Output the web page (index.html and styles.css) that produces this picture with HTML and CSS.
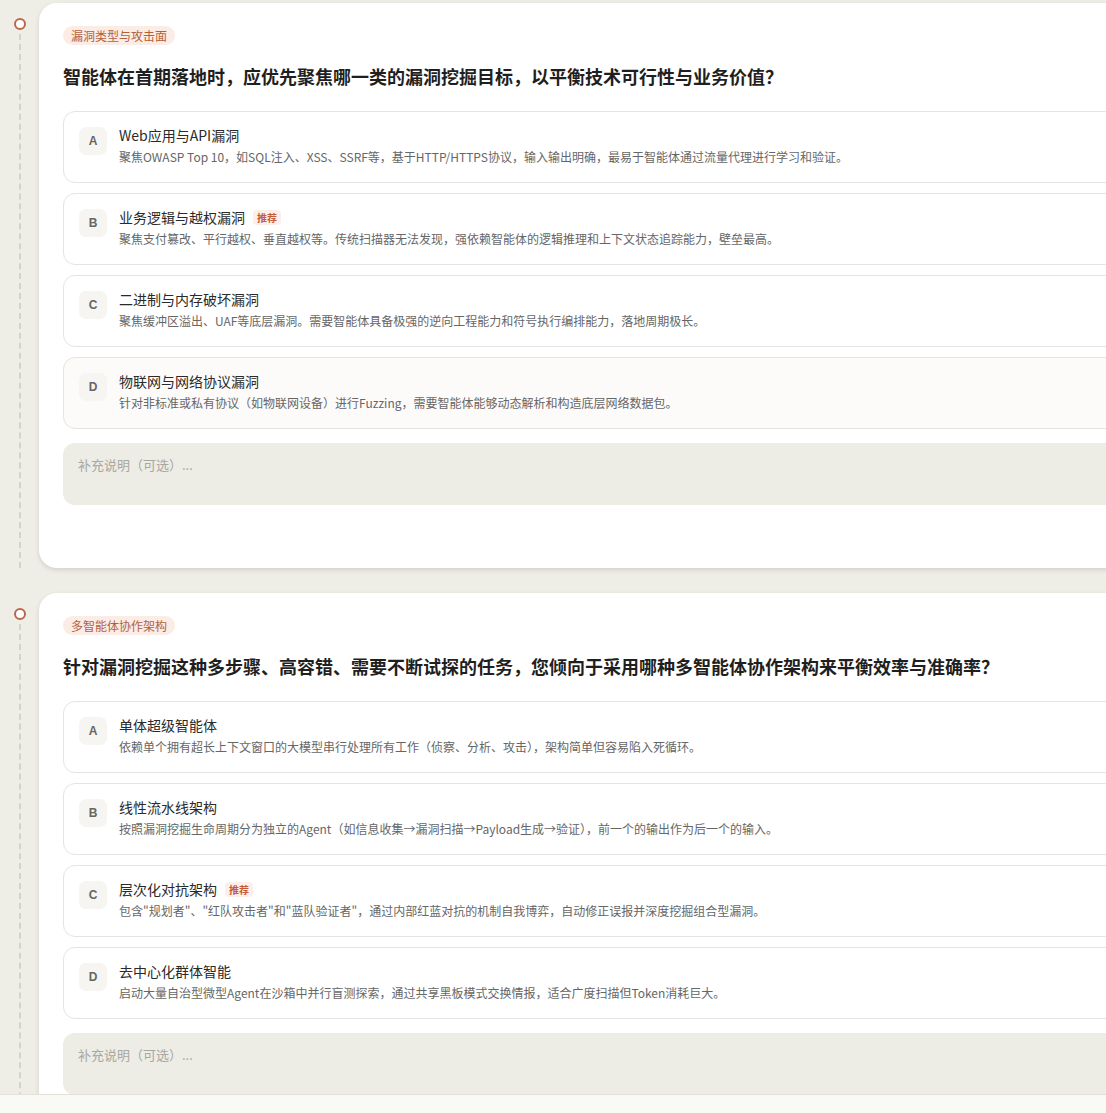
FILE: index.html
```html
<!DOCTYPE html>
<html lang="zh-CN">
<head>
  <meta charset="UTF-8">
  <meta name="viewport" content="width=device-width, initial-scale=1.0">
  <title>需求澄清</title>
  <link rel="stylesheet" href="styles.css">
</head>
<body>
  <div class="flow">

    <section class="step">
      <div class="rail">
        <span class="dot"></span>
        <span class="line"></span>
      </div>
      <div class="card">
        <span class="tag">漏洞类型与攻击面</span>
        <h2 class="question">智能体在首期落地时，应优先聚焦哪一类的漏洞挖掘目标，以平衡技术可行性与业务价值？</h2>
        <div class="options">
          <div class="option">
            <span class="letter">A</span>
            <div class="body">
              <div class="title">Web应用与API漏洞</div>
              <div class="desc">聚焦OWASP Top 10，如SQL注入、XSS、SSRF等，基于HTTP/HTTPS协议，输入输出明确，最易于智能体通过流量代理进行学习和验证。</div>
            </div>
          </div>
          <div class="option">
            <span class="letter">B</span>
            <div class="body">
              <div class="title">业务逻辑与越权漏洞 <span class="pick">推荐</span></div>
              <div class="desc">聚焦支付篡改、平行越权、垂直越权等。传统扫描器无法发现，强依赖智能体的逻辑推理和上下文状态追踪能力，壁垒最高。</div>
            </div>
          </div>
          <div class="option">
            <span class="letter">C</span>
            <div class="body">
              <div class="title">二进制与内存破坏漏洞</div>
              <div class="desc">聚焦缓冲区溢出、UAF等底层漏洞。需要智能体具备极强的逆向工程能力和符号执行编排能力，落地周期极长。</div>
            </div>
          </div>
          <div class="option hover">
            <span class="letter">D</span>
            <div class="body">
              <div class="title">物联网与网络协议漏洞</div>
              <div class="desc">针对非标准或私有协议（如物联网设备）进行Fuzzing，需要智能体能够动态解析和构造底层网络数据包。</div>
            </div>
          </div>
        </div>
        <textarea class="note" placeholder="补充说明（可选）..."></textarea>
      </div>
    </section>

    <section class="step">
      <div class="rail">
        <span class="dot"></span>
        <span class="line"></span>
      </div>
      <div class="card">
        <span class="tag">多智能体协作架构</span>
        <h2 class="question">针对漏洞挖掘这种多步骤、高容错、需要不断试探的任务，您倾向于采用哪种多智能体协作架构来平衡效率与准确率？</h2>
        <div class="options">
          <div class="option">
            <span class="letter">A</span>
            <div class="body">
              <div class="title">单体超级智能体</div>
              <div class="desc">依赖单个拥有超长上下文窗口的大模型串行处理所有工作（侦察、分析、攻击），架构简单但容易陷入死循环。</div>
            </div>
          </div>
          <div class="option">
            <span class="letter">B</span>
            <div class="body">
              <div class="title">线性流水线架构</div>
              <div class="desc">按照漏洞挖掘生命周期分为独立的Agent（如信息收集→漏洞扫描→Payload生成→验证），前一个的输出作为后一个的输入。</div>
            </div>
          </div>
          <div class="option">
            <span class="letter">C</span>
            <div class="body">
              <div class="title">层次化对抗架构 <span class="pick">推荐</span></div>
              <div class="desc">包含"规划者"、"红队攻击者"和"蓝队验证者"，通过内部红蓝对抗的机制自我博弈，自动修正误报并深度挖掘组合型漏洞。</div>
            </div>
          </div>
          <div class="option">
            <span class="letter">D</span>
            <div class="body">
              <div class="title">去中心化群体智能</div>
              <div class="desc">启动大量自治型微型Agent在沙箱中并行盲测探索，通过共享黑板模式交换情报，适合广度扫描但Token消耗巨大。</div>
            </div>
          </div>
        </div>
        <textarea class="note" placeholder="补充说明（可选）..."></textarea>
      </div>
    </section>

  </div>

  <footer class="bar"></footer>
</body>
</html>
```

FILE: styles.css
```css
body {
  margin: 0;
  background-color: #eeede6;
  font-family: "Noto Sans CJK SC", "Noto Sans", sans-serif;
  color: #222;
  overflow: hidden;
}

.flow {
  display: flex;
  flex-direction: column;
  gap: 25px;
  padding-top: 3px;
}

.step {
  display: flex;
}

.rail {
  flex: 0 0 39px;
  display: flex;
  flex-direction: column;
  align-items: center;
  padding-top: 15px;
}

.dot {
  width: 8px;
  height: 8px;
  border: 2px solid #b8694a;
  border-radius: 50%;
  background-color: #fff;
}

.line {
  flex: 1;
  margin-top: 4px;
  border-left: 2px dashed #d4d2cb;
}

.card {
  flex: 0 0 1110px;
  background-color: #fff;
  border-radius: 18px;
  box-shadow: 0 2px 5px rgba(0, 0, 0, 0.12);
  padding: 23px 24px 63px 24px;
  box-sizing: border-box;
  display: flex;
  flex-direction: column;
  align-items: flex-start;
}

.tag {
  font-size: 12px;
  line-height: 19px;
  color: #b4603f;
  background-color: #fbece5;
  border-radius: 10px;
  padding: 0 8px;
}

.question {
  margin: 17px 0 21px 0;
  font-size: 18px;
  line-height: 28px;
  font-weight: 700;
  color: #1f1f1f;
}

.options {
  align-self: stretch;
  display: flex;
  flex-direction: column;
  gap: 10px;
}

.option {
  display: flex;
  align-items: flex-start;
  gap: 12px;
  height: 72px;
  box-sizing: border-box;
  padding: 14px 15px;
  border: 1px solid #e6e4de;
  border-radius: 12px;
  background-color: #fff;
}

.option.hover {
  background-color: #fdfbfa;
}

.letter {
  flex: 0 0 28px;
  height: 28px;
  margin-top: 1px;
  border-radius: 7px;
  background-color: #f7f5f1;
  display: flex;
  align-items: center;
  justify-content: center;
  font-family: "Liberation Sans", sans-serif;
  font-size: 12px;
  font-weight: 700;
  color: #666;
}

.title {
  font-size: 14px;
  line-height: 18px;
  color: #2a2a2a;
  display: flex;
  align-items: center;
  gap: 8px;
}

.pick {
  font-size: 10px;
  line-height: 15px;
  font-weight: 700;
  color: #c65a32;
  background-color: #fcefe9;
  border-radius: 4px;
  padding: 0 4px;
}

.desc {
  margin-top: 4px;
  font-size: 12px;
  line-height: 17px;
  color: #666;
  white-space: nowrap;
}

.note {
  align-self: stretch;
  margin-top: 14px;
  height: 62px;
  box-sizing: border-box;
  padding: 12px 15px;
  border: none;
  outline: none;
  resize: none;
  border-radius: 12px;
  background-color: #edece5;
  font-family: "Noto Sans CJK SC", sans-serif;
  font-size: 13px;
  color: #333;
}

.note::placeholder {
  color: #a9a7a1;
}

.bar {
  position: fixed;
  left: 0;
  right: 0;
  bottom: 0;
  height: 18px;
  background-color: #f9f9f5;
  border-top: 1px solid #e3e1da;
}
```
